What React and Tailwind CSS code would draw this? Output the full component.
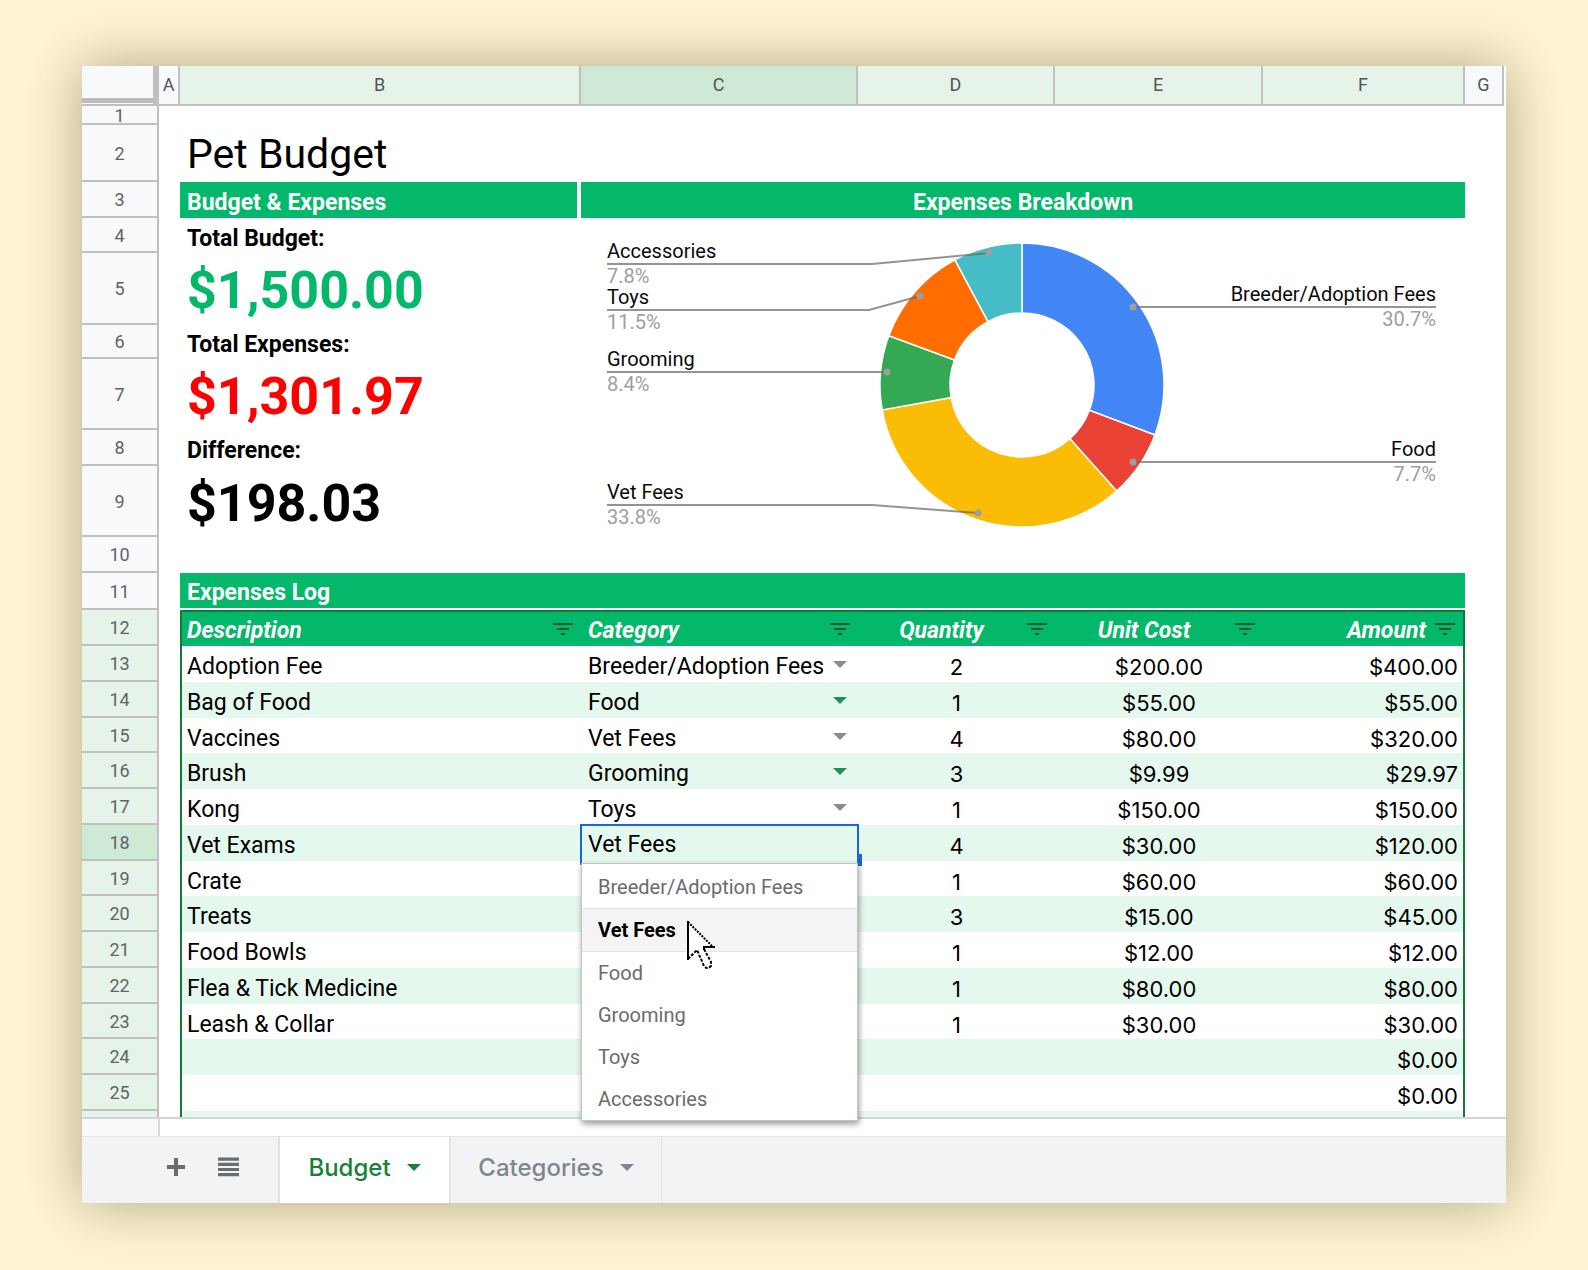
import { Fragment } from "react";

const LETTERS = [
  ["A", "bg-[#f8f9fb]"],
  ["B", "bg-[#e6f3e8]"],
  ["C", "bg-[#cfe9d7]"],
  ["D", "bg-[#e6f3e8]"],
  ["E", "bg-[#e6f3e8]"],
  ["F", "bg-[#e6f3e8]"],
  ["G", "bg-[#f8f9fb]"],
];

const CATEGORIES = ["Breeder/Adoption Fees", "Vet Fees", "Food", "Grooming", "Toys", "Accessories"];

const ROWS = [
  [13, "h-[36px]", "Adoption Fee", "Breeder/Adoption Fees", "2", "$200.00", "$400.00"],
  [14, "h-[36px]", "Bag of Food", "Food", "1", "$55.00", "$55.00"],
  [15, "h-[35px]", "Vaccines", "Vet Fees", "4", "$80.00", "$320.00"],
  [16, "h-[36px]", "Brush", "Grooming", "3", "$9.99", "$29.97"],
  [17, "h-[36px]", "Kong", "Toys", "1", "$150.00", "$150.00"],
  [18, "h-[36px]", "Vet Exams", "Vet Fees", "4", "$30.00", "$120.00"],
  [19, "h-[35px]", "Crate", "", "1", "$60.00", "$60.00"],
  [20, "h-[36px]", "Treats", "", "3", "$15.00", "$45.00"],
  [21, "h-[36px]", "Food Bowls", "", "1", "$12.00", "$12.00"],
  [22, "h-[36px]", "Flea & Tick Medicine", "", "1", "$80.00", "$80.00"],
  [23, "h-[35px]", "Leash & Collar", "", "1", "$30.00", "$30.00"],
  [24, "h-[36px]", "", "", "", "", "$0.00"],
  [25, "h-[36px]", "", "", "", "", "$0.00"],
];

const SLICES = [
  [400, "#4285f4"],
  [100, "#ea4335"],
  [440, "#fabc05"],
  [109.99, "#34a853"],
  [150, "#ff6d01"],
  [101.98, "#46bdc6"],
];

const LABELS = [
  { name: "Accessories", pct: "7.8%", y: 46, bend: 291, dot: [408, 35] },
  { name: "Toys", pct: "11.5%", y: 92, bend: 288, dot: [339, 78] },
  { name: "Grooming", pct: "8.4%", y: 154, bend: 291, dot: [306, 154] },
  { name: "Vet Fees", pct: "33.8%", y: 287, bend: 291, dot: [397, 295] },
  { name: "Breeder/Adoption Fees", pct: "30.7%", y: 89, right: true, dot: [552, 89] },
  { name: "Food", pct: "7.7%", y: 244, right: true, dot: [552, 244] },
];

function slicePath(from, to) {
  const cx = 441, cy = 167, R = 142, r = 72;
  const pt = (rad, t) => {
    const a = t * 2 * Math.PI;
    return `${cx + rad * Math.sin(a)} ${cy - rad * Math.cos(a)}`;
  };
  const large = to - from > 0.5 ? 1 : 0;
  return `M${pt(R, from)}A${R} ${R} 0 ${large} 1 ${pt(R, to)}L${pt(r, to)}A${r} ${r} 0 ${large} 0 ${pt(r, from)}Z`;
}

function Donut() {
  const total = SLICES.reduce((s, [v]) => s + v, 0);
  let acc = 0;
  return (
    <svg viewBox="0 0 884 352" className="block w-full" role="img" aria-label="Expenses Breakdown">
      {SLICES.map(([v, fill]) => {
        const from = acc / total;
        acc += v;
        return <path key={fill} d={slicePath(from, acc / total)} fill={fill} stroke="#fff" strokeWidth="1.5" />;
      })}
      {LABELS.map((l) => {
        const x = l.right ? 855 : 26;
        const anchor = l.right ? "end" : "start";
        const points = l.right ? `${x},${l.y} ${l.dot}` : `${x},${l.y} ${l.bend},${l.y} ${l.dot}`;
        return (
          <Fragment key={l.name}>
            <polyline points={points} fill="none" stroke="#666666" strokeOpacity="0.7" strokeWidth="2" />
            <circle cx={l.dot[0]} cy={l.dot[1]} r="3.5" fill="#9e9e9e" />
            <text x={x} y={l.y - 6} textAnchor={anchor} fontSize="20" fill="#0a0a0a">{l.name}</text>
            <text x={x} y={l.y + 19} textAnchor={anchor} fontSize="20" fill="#9e9e9e">{l.pct}</text>
          </Fragment>
        );
      })}
    </svg>
  );
}

function RowHead({ n, tone = "bg-[#f8f9fb]" }) {
  return (
    <th scope="row" className={`border-r-2 border-b-2 border-[#c0c0c0] px-0 pt-[2px] pb-0 text-center text-lg leading-6 font-normal text-[#5f6368] ${tone}`}>
      {n}
    </th>
  );
}

function Caret({ className = "" }) {
  return (
    <svg viewBox="0 0 14 7" className={`h-[7px] w-[14px] ${className}`} fill="currentColor" aria-hidden="true">
      <path d="M0 0h14L7 7z" />
    </svg>
  );
}

function FilterButton({ label }) {
  return (
    <button type="button" aria-label={`Filter ${label}`} className="shrink-0">
      <svg viewBox="0 0 22 14" className="h-[14px] w-[22px]" fill="#0b5a2c" aria-hidden="true">
        <path d="M1 1h20v2H1zM5 6h12v2H5zM9 11h4v2H9z" />
      </svg>
    </button>
  );
}

function HeadCell({ label, align, className = "px-[7px]" }) {
  return (
    <td className={`border-t-2 border-[#117a37] bg-[#03b86a] py-0 text-white ${className}`}>
      <div className="flex items-center">
        <span className={`flex-1 pt-1 text-[23px] leading-7 font-bold italic ${align}`}>{label}</span>
        <FilterButton label={label} />
      </div>
    </td>
  );
}

function Cursor() {
  return (
    <svg viewBox="0 0 29 49" className="pointer-events-none absolute top-[57px] left-[105px] h-[49px] w-[29px]" aria-hidden="true">
      <path d="M1 1V38L10 29L17 45Q20 49 24 45L17 27H27Z" fill="#fff" />
      <path d="M1 0V39" stroke="#000" strokeWidth="2" />
      <path d="M1 1L26 26" stroke="#000" strokeWidth="2" strokeDasharray="2 1.2" />
      <path d="M28 26H17V29" stroke="#000" strokeWidth="2" fill="none" />
      <path d="M1 38L10 29L17 45Q20 49 24 45V41L17 28" stroke="#000" strokeWidth="2" strokeDasharray="3 1.5" fill="none" />
    </svg>
  );
}

function CategoryMenu() {
  return (
    <div role="listbox" aria-label="Category" className="absolute top-[38px] left-0 z-10 w-full border border-[#c4c4c4] bg-white pt-[2px] shadow-[1px_3px_6px_rgba(0,0,0,0.4)]">
      {CATEGORIES.map((c) => (
        <button
          key={c}
          type="button"
          role="option"
          aria-selected={c === "Vet Fees"}
          className={
            c === "Vet Fees"
              ? "block h-[44px] w-full border-y border-[#e3e3e3] bg-[#f4f4f4] pl-4 text-left text-xl font-bold text-black"
              : "block h-[42px] w-full pl-4 text-left text-xl text-[#6b6b6b]"
          }
        >
          {c}
        </button>
      ))}
      <Cursor />
    </div>
  );
}

function CategoryCell({ row, value, shaded }) {
  if (row === 18) {
    return (
      <div className="relative h-[36px]">
        <div className="absolute -top-px -right-px -left-px h-[41px] border-2 border-[#1a66d9] bg-[#e5f8ed]">
          <input aria-label="Category row 18" defaultValue={value} className="h-[35px] w-full bg-transparent pt-[2px] pl-[6px] text-[23px] outline-none" />
          <span className="absolute -right-[5px] -bottom-[3px] h-[12px] w-[5px] bg-[#1a66d9]" />
        </div>
        <CategoryMenu />
      </div>
    );
  }
  if (!value) return null;
  return (
    <div className="relative">
      <select
        aria-label={`Category row ${row}`}
        defaultValue={value}
        className="block h-[34px] w-full appearance-none bg-transparent pt-[3px] pl-[7px] text-[23px] outline-none"
      >
        {CATEGORIES.map((c) => (
          <option key={c}>{c}</option>
        ))}
      </select>
      <Caret className={`pointer-events-none absolute top-[14px] right-[11px] ${shaded ? "text-[#1f9254]" : "text-[#8a8a8a]"}`} />
    </div>
  );
}

function Figure({ label, row, labelHeight, valueRow, valueHeight, value, tone, chart }) {
  return (
    <>
      <tr className={labelHeight}>
        <RowHead n={row} />
        <td />
        <td className="px-[7px] pt-[6px] pb-0 text-[23px] leading-7 font-bold">{label}</td>
        {chart && (
          <td colSpan={4} rowSpan={7} className="p-0 align-top">
            <Donut />
          </td>
        )}
        <td />
      </tr>
      <tr className={valueHeight}>
        <RowHead n={valueRow} />
        <td />
        <td className={`px-[7px] pt-1 pb-0 text-[52px] leading-[60px] font-bold ${tone}`}>{value}</td>
        <td />
      </tr>
    </>
  );
}

export default function App() {
  return (
    <main className="min-h-screen bg-[#fef4d1] px-[82px] py-[66px] font-[Roboto,sans-serif] text-black">
      <div className="bg-white shadow-[0_0_54px_rgba(60,50,20,0.4)]">
        <div className="border-b-2 border-[#d5d5d5] pr-[2px]">
          <table className="w-full table-fixed border-separate border-spacing-0">
            <colgroup>
              <col className="w-[77px]" />
              <col className="w-[21px]" />
              <col />
              <col className="w-[277px]" />
              <col className="w-[197px]" />
              <col className="w-[208px]" />
              <col className="w-[202px]" />
              <col className="w-[39px]" />
            </colgroup>
            <thead>
              <tr className="h-[40px]">
                <td className="border-r-[6px] border-b-2 border-[#c0c0c0] bg-[#f8f9fb] p-0 align-top">
                  <div className="h-[37px] border-b-[5px] border-[#bcbcbc]" />
                </td>
                {LETTERS.map(([l, tone]) => (
                  <th key={l} scope="col" className={`border-r-2 border-b-2 border-[#c0c0c0] p-0 text-lg leading-6 font-normal text-[#4f5659] ${tone}`}>
                    {l}
                  </th>
                ))}
              </tr>
            </thead>
            <tbody>
              <tr className="h-[19px]">
                <RowHead n={<div className="leading-[15px]">1</div>} />
                <td colSpan={7} />
              </tr>
              <tr className="h-[57px]">
                <RowHead n={2} />
                <td />
                <td colSpan={6} className="px-[7px] py-0 text-[41px] leading-[48px]">Pet Budget</td>
              </tr>
              <tr className="h-[36px]">
                <RowHead n={3} />
                <td />
                <td className="border-r-4 border-white bg-[#03b86a] bg-clip-padding px-[7px] pt-[6px] pb-0 text-[23px] leading-7 font-bold text-white">Budget &amp; Expenses</td>
                <td colSpan={4} className="bg-[#03b86a] pt-[6px] pb-0 text-center text-[23px] leading-7 font-bold text-white">Expenses Breakdown</td>
                <td />
              </tr>
              <Figure label="Total Budget:" row={4} labelHeight="h-[35px]" valueRow={5} valueHeight="h-[72px]" value="$1,500.00" tone="text-[#03b86a]" chart />
              <Figure label="Total Expenses:" row={6} labelHeight="h-[34px]" valueRow={7} valueHeight="h-[71px]" value="$1,301.97" tone="text-[#ff0000]" />
              <Figure label="Difference:" row={8} labelHeight="h-[36px]" valueRow={9} valueHeight="h-[71px]" value="$198.03" tone="text-black" />
              <tr className="h-[36px]">
                <RowHead n={10} />
                <td />
                <td />
                <td />
              </tr>
              <tr className="h-[37px]">
                <RowHead n={11} />
                <td />
                <td colSpan={5} className="border-b-2 border-white bg-[#03b86a] px-[7px] pt-1 pb-0 text-[23px] leading-7 font-bold text-white">Expenses Log</td>
                <td />
              </tr>
              <tr className="h-[36px]">
                <RowHead n={12} tone="bg-[#e6f3e8]" />
                <td />
                <HeadCell label="Description" align="text-left" className="border-l-2 pr-[7px] pl-[5px]" />
                <HeadCell label="Category" align="text-left" />
                <HeadCell label="Quantity" align="pr-2 text-center" />
                <HeadCell label="Unit Cost" align="pr-2 text-center" />
                <HeadCell label="Amount" align="pr-2 text-right" className="border-r-2 px-[7px]" />
                <td />
              </tr>
              {ROWS.map(([n, height, desc, cat, qty, cost, amount], i) => {
                const shaded = i % 2 === 1;
                const bg = shaded ? "bg-[#e5f8ed]" : "bg-white";
                return (
                  <tr key={n} className={height}>
                    <RowHead n={n} tone={n === 18 ? "bg-[#cfe9d7]" : "bg-[#e6f3e8]"} />
                    <td />
                    <td className={`border-l-2 border-[#117a37] px-[5px] pt-[6px] pb-0 text-[23px] leading-7 ${bg}`}>{desc}</td>
                    <td className={`p-0 ${bg}`}>
                      <CategoryCell row={n} value={cat} shaded={shaded} />
                    </td>
                    <td className={`pt-[6px] pb-0 text-center font-[Inter] text-[22px] leading-7 ${bg}`}>{qty}</td>
                    <td className={`pt-[6px] pb-0 text-center font-[Inter] text-[22px] leading-7 ${bg}`}>{cost}</td>
                    <td className={`border-r-2 border-[#117a37] pt-[6px] pr-[5px] pb-0 text-right font-[Inter] text-[22px] leading-7 ${bg}`}>{amount}</td>
                    <td />
                  </tr>
                );
              })}
              <tr className="h-[6px]">
                <td className="border-r-2 border-[#c0c0c0] bg-[#e6f3e8] p-0" />
                <td />
                <td colSpan={5} className="border-x-2 border-[#117a37] bg-[#e5f8ed] p-0" />
                <td />
              </tr>
            </tbody>
          </table>
        </div>
        <div className="h-[17px]">
          <div className="h-full w-[78px] border-r-2 border-[#dadada] bg-[#f8f9fb]" />
        </div>
        <footer className="flex h-[67px] items-stretch border-t border-[#e4e6e8] bg-[#f1f3f4] font-[Inter]">
          <div className="flex w-[198px] items-center gap-[33px] border-r-2 border-[#e0e2e4] pb-[6px] pl-[85px] text-[#6a6d70]">
            <button type="button" aria-label="Add sheet">
              <svg viewBox="0 0 18 18" className="h-[18px] w-[18px]" stroke="currentColor" strokeWidth="4" aria-hidden="true">
                <path d="M9 0V18M0 9H18" />
              </svg>
            </button>
            <button type="button" aria-label="All sheets">
              <svg viewBox="0 0 21 20" className="h-[20px] w-[21px]" fill="currentColor" aria-hidden="true">
                <path d="M0 0.5h21v3.2H0zM0 5.7h21v3.2H0zM0 10.9h21v3.2H0zM0 16.1h21v3.2H0z" />
              </svg>
            </button>
          </div>
          <button type="button" className="flex w-[169px] items-center justify-center gap-4 bg-white pb-[5px] text-2xl font-medium text-[#188038]">
            Budget
            <Caret />
          </button>
          <button type="button" className="flex w-[213px] items-center justify-center gap-4 border-r border-l-2 border-[#e0e2e4] pb-[5px] text-2xl font-medium text-[#80868b]">
            Categories
            <Caret />
          </button>
        </footer>
      </div>
    </main>
  );
}
